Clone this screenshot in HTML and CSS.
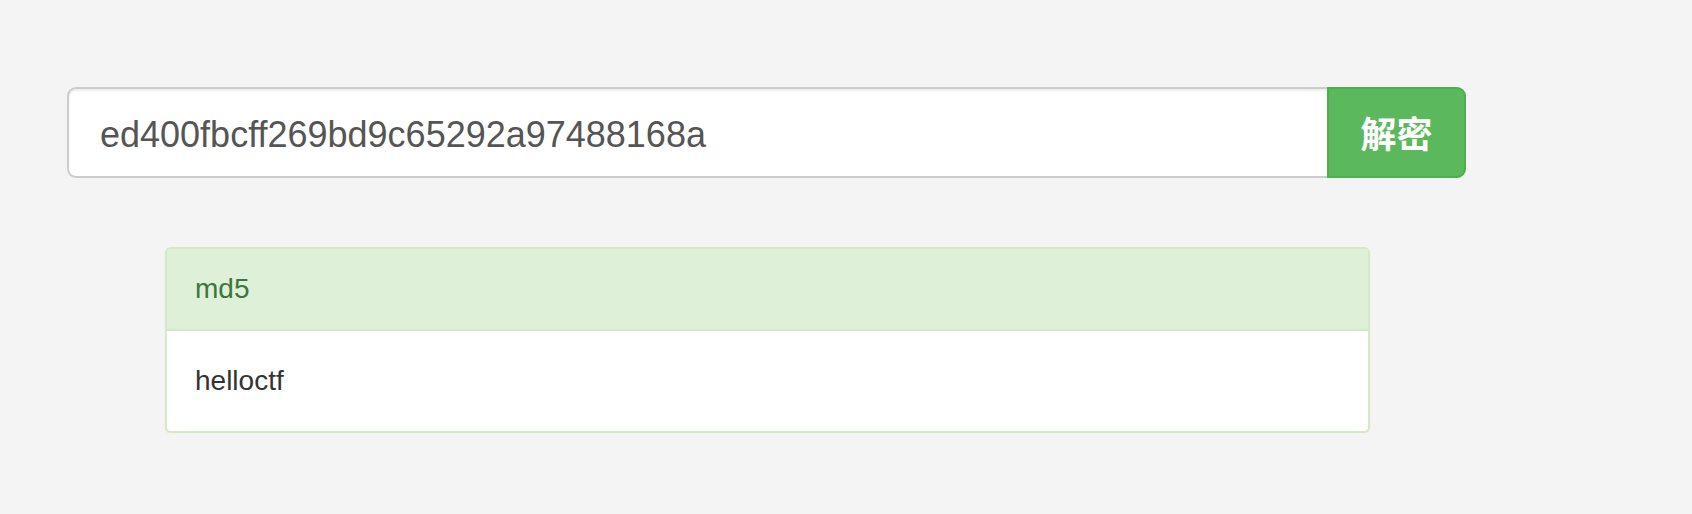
FILE: index.html
```
<!DOCTYPE html>
<html lang="zh">
<head>
<meta charset="utf-8">
<title>md5</title>
<link rel="stylesheet" href="styles.css">
</head>
<body>
<div class="page">
  <form class="input-group">
    <input class="hash-input" type="text" value="ed400fbcff269bd9c65292a97488168a">
    <button class="btn-decrypt" type="button">解密</button>
  </form>
  <div class="panel">
    <div class="panel-heading">md5</div>
    <div class="panel-body">helloctf</div>
  </div>
</div>
</body>
</html>
```

FILE: styles.css
```
html, body {
  margin: 0;
  padding: 0;
  background: #f4f4f4;
  font-family: "Liberation Sans", Arial, "Noto Sans CJK SC", sans-serif;
}
.page {
  padding: 87px 0 0 67px;
}
.input-group {
  display: flex;
  width: 1399px;
  height: 91px;
  margin: 0;
}
.hash-input {
  flex: 1;
  box-sizing: border-box;
  height: 91px;
  margin: 0;
  border: 2px solid #cccccc;
  border-right: none;
  border-radius: 9px 0 0 9px;
  background: #fff;
  box-shadow: inset 0 2px 2px rgba(0,0,0,0.075);
  padding: 4px 0 0 31px;
  font-family: "Liberation Sans", Arial, sans-serif;
  font-size: 36px;
  color: #555555;
  outline: none;
}
.btn-decrypt {
  box-sizing: border-box;
  width: 139px;
  height: 91px;
  margin: 0;
  padding: 0 0 2px 0;
  border: 2px solid #4cae4c;
  border-radius: 0 9px 9px 0;
  background: #5cb85c;
  color: #fff;
  font-family: "Noto Sans CJK SC", "Liberation Sans", sans-serif;
  font-weight: bold;
  font-size: 36px;
  cursor: pointer;
}
.panel {
  box-sizing: border-box;
  width: 1205px;
  margin: 69px 0 0 98px;
  border: 2px solid #d6e9c6;
  border-radius: 6px;
  background: #fff;
  box-shadow: 0 1px 2px rgba(0,0,0,0.05);
  overflow: hidden;
}
.panel-heading {
  display: flex;
  align-items: center;
  height: 80px;
  padding: 0 28px;
  background: #dff0d8;
  border-bottom: 2px solid #d6e9c6;
  color: #3c763d;
  font-size: 28px;
}
.panel-body {
  display: flex;
  align-items: center;
  height: 100px;
  padding: 0 28px;
  color: #333333;
  font-size: 28px;
}
```
